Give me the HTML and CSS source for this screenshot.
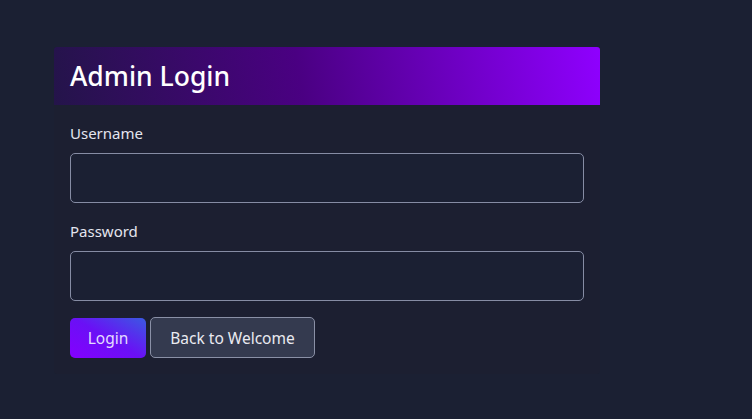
FILE: index.html
```html
<!DOCTYPE html>
<html lang="en">
<head>
<meta charset="utf-8">
<title>Admin Login</title>
<link rel="stylesheet" href="styles.css">
</head>
<body>
<main class="page">
  <section class="card">
    <header class="card-header">
      <h1 class="title">Admin Login</h1>
    </header>
    <form class="card-body">
      <div class="field">
        <label class="label" for="username">Username</label>
        <input class="input" id="username" type="text">
      </div>
      <div class="field">
        <label class="label" for="password">Password</label>
        <input class="input" id="password" type="password">
      </div>
      <div class="actions">
        <button class="btn btn-primary" type="button">Login</button>
        <button class="btn btn-secondary" type="button">Back to Welcome</button>
      </div>
    </form>
  </section>
</main>
</body>
</html>
```
FILE: styles.css
```css
* { box-sizing: border-box; }
html, body {
  margin: 0;
  padding: 0;
  background: #1b2033;
  color: #e6e6ef;
  font-family: "Noto Sans", "Open Sans", sans-serif;
}
.page {
  padding: 47px 0 0 54px;
}
.card {
  width: 546px;
  background: #1c1f31;
  border-radius: 3px;
  overflow: hidden;
}
.card-header {
  height: 58px;
  padding: 0 16px;
  display: flex;
  align-items: center;
  background: linear-gradient(80deg, #24144a 0%, #4a0082 45%, #8f00ff 100%);
}
.title {
  margin: 0;
  font-size: 26.5px;
  font-weight: 500;
  color: #ffffff;
}
.card-body {
  padding: 16px 16px 16px;
  display: flex;
  flex-direction: column;
  gap: 16px;
}
.field {
  display: flex;
  flex-direction: column;
  gap: 8px;
}
.label {
  font-size: 15px;
  line-height: 24px;
  color: #e4e5ee;
}
.input {
  width: 514px;
  height: 50px;
  background: #1b2033;
  border: 1px solid #868ca4;
  border-radius: 5px;
  color: #fff;
  font-size: 16px;
  padding: 0 12px;
  font-family: inherit;
}
.actions {
  display: flex;
  gap: 4px;
  align-items: center;
}
.btn {
  font-family: inherit;
  font-size: 15.5px;
  height: 41px;
  border-radius: 5px;
  cursor: pointer;
}
.btn-primary {
  width: 76px;
  height: 40px;
  border: none;
  color: #e3dcff;
  background: linear-gradient(30deg, #8500ff 0%, #6a10f5 50%, #3a5ae2 100%);
}
.btn-secondary {
  width: 165px;
  background: #343a4f;
  border: 1px solid #8a90a6;
  color: #eaeaf1;
}
```
